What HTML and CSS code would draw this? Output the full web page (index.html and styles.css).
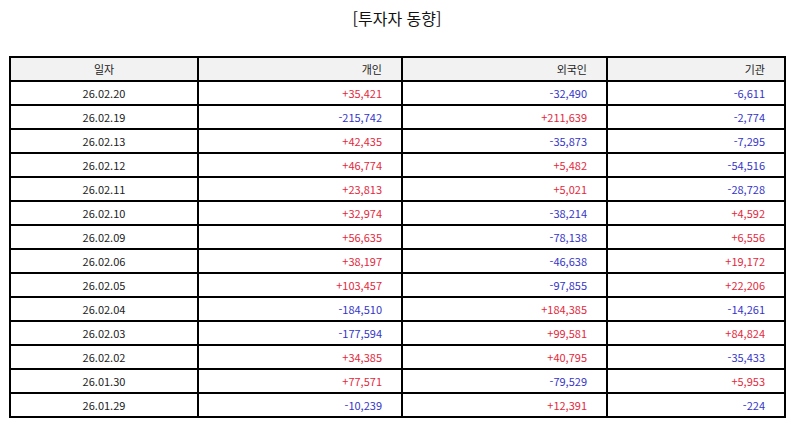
FILE: index.html
```html
<!DOCTYPE html>
<html lang="ko">
<head>
<meta charset="utf-8">
<link rel="stylesheet" href="styles.css">
</head>
<body>
<h1 class="title">[투자자 동향]</h1>
<table class="flow">
<colgroup><col class="c1"><col class="c2"><col class="c3"><col class="c4"></colgroup>
<thead>
<tr><th class="date">일자</th><th>개인</th><th>외국인</th><th>기관</th></tr>
</thead>
<tbody>
<tr><td class="date">26.02.20</td><td class="up">+35,421</td><td class="dn">-32,490</td><td class="dn">-6,611</td></tr>
<tr><td class="date">26.02.19</td><td class="dn">-215,742</td><td class="up">+211,639</td><td class="dn">-2,774</td></tr>
<tr><td class="date">26.02.13</td><td class="up">+42,435</td><td class="dn">-35,873</td><td class="dn">-7,295</td></tr>
<tr><td class="date">26.02.12</td><td class="up">+46,774</td><td class="up">+5,482</td><td class="dn">-54,516</td></tr>
<tr><td class="date">26.02.11</td><td class="up">+23,813</td><td class="up">+5,021</td><td class="dn">-28,728</td></tr>
<tr><td class="date">26.02.10</td><td class="up">+32,974</td><td class="dn">-38,214</td><td class="up">+4,592</td></tr>
<tr><td class="date">26.02.09</td><td class="up">+56,635</td><td class="dn">-78,138</td><td class="up">+6,556</td></tr>
<tr><td class="date">26.02.06</td><td class="up">+38,197</td><td class="dn">-46,638</td><td class="up">+19,172</td></tr>
<tr><td class="date">26.02.05</td><td class="up">+103,457</td><td class="dn">-97,855</td><td class="up">+22,206</td></tr>
<tr><td class="date">26.02.04</td><td class="dn">-184,510</td><td class="up">+184,385</td><td class="dn">-14,261</td></tr>
<tr><td class="date">26.02.03</td><td class="dn">-177,594</td><td class="up">+99,581</td><td class="up">+84,824</td></tr>
<tr><td class="date">26.02.02</td><td class="up">+34,385</td><td class="up">+40,795</td><td class="dn">-35,433</td></tr>
<tr><td class="date">26.01.30</td><td class="up">+77,571</td><td class="dn">-79,529</td><td class="up">+5,953</td></tr>
<tr><td class="date">26.01.29</td><td class="dn">-10,239</td><td class="up">+12,391</td><td class="dn">-224</td></tr>
</tbody>
</table>
</body>
</html>
```
FILE: styles.css
```css
html, body {
  margin: 0;
  padding: 0;
  background: #fff;
  font-family: "Noto Sans CJK KR", "Noto Sans", sans-serif;
  color: #222;
}
.title {
  margin: 0;
  padding-top: 6px;
  font-size: 16px;
  line-height: 24px;
  font-weight: normal;
  text-align: center;
  color: #111;
}
.flow {
  margin: 26px 0 0 9px;
  border-collapse: collapse;
  table-layout: fixed;
  width: 777px;
  font-size: 11px;
}
.c1 { width: 188px; }
.c2 { width: 204px; }
.c3 { width: 205px; }
.c4 { width: 178px; }
.flow th, .flow td {
  border: 2px solid #000;
  height: 22px;
  padding: 0 19px 0 0;
  line-height: 22px;
  text-align: right;
  font-weight: normal;
  white-space: nowrap;
}
.flow th {
  background: #f2f2f2;
  color: #222;
}
.flow .date {
  text-align: center;
  padding: 0;
}
.up { color: #e3283c; }
.dn { color: #3535c8; }
```
